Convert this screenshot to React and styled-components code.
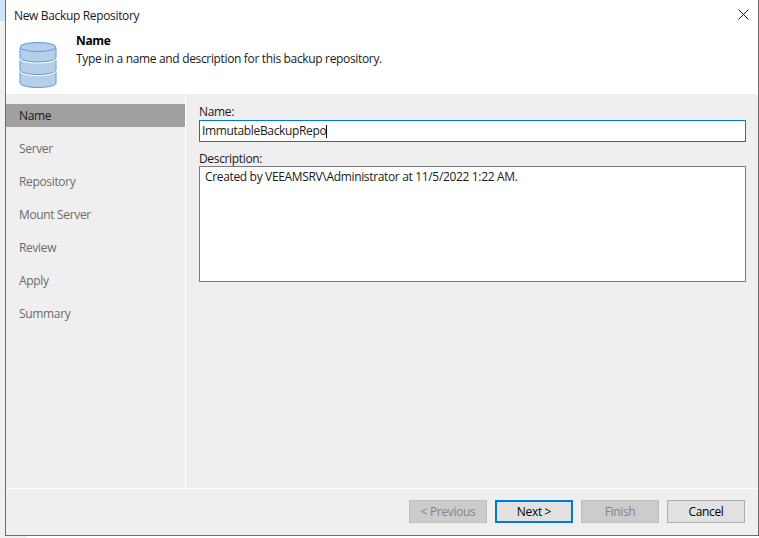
import React from 'react'
import styled, { createGlobalStyle } from 'styled-components'

const GlobalStyle = createGlobalStyle`
  html, body {
    margin: 0;
    padding: 0;
    background: #f0f0f0;
  }
  body {
    font-family: "Open Sans", "Liberation Sans", sans-serif;
    font-size: 12px;
    letter-spacing: -0.34px;
    color: #1a1a1a;
  }
`

const Page = styled.div`
  width: 759px;
  height: 538px;
  box-sizing: border-box;
  padding: 0 0 2px 5px;
  overflow: hidden;
  background:
    linear-gradient(#cfe3f8, #cfe3f8) 0 0 / 5px 21px no-repeat,
    linear-gradient(#fff, #fff) 27px 536px / 732px 2px no-repeat,
    #f0f0f0;
`

const Window = styled.div`
  height: 100%;
  box-sizing: border-box;
  border: 1px solid #6d6d6d;
  border-top: none;
  display: flex;
  flex-direction: column;
  background: #efefef;
`

const Header = styled.div`
  height: 94px;
  flex: none;
  background: #fff;
  display: flex;
  flex-direction: column;
`

const TitleBar = styled.div`
  height: 30px;
  padding-left: 8px;
  display: flex;
  align-items: center;
  justify-content: space-between;
`

const CloseButton = styled.button`
  width: 30px;
  height: 28px;
  margin-bottom: 2px;
  padding: 0;
  border: none;
  background: none;
  display: flex;
  align-items: center;
  justify-content: center;
`

const Banner = styled.div`
  display: flex;
  padding: 2px 0 0 13px;
`

const IconSlot = styled.div`
  margin-top: 10px;
  height: 46px;
`

const Heading = styled.div`
  margin-left: 19px;
  line-height: 18px;
`

const HeadingTitle = styled.div`
  font-weight: 700;
  color: #000;
`

const Body = styled.div`
  flex: 1;
  display: flex;
  min-height: 0;
`

const Sidebar = styled.div`
  width: 179px;
  flex: none;
  border-right: 1px solid #fff;
  padding-top: 10px;
  display: flex;
  flex-direction: column;
  gap: 10px;
`

const Step = styled.div`
  height: 23px;
  padding-left: 13px;
  display: flex;
  align-items: center;
  background: ${p => (p.$active ? '#a0a0a0' : 'transparent')};
  color: ${p => (p.$active ? '#1a1a1a' : '#6c6c6c')};
`

const Content = styled.div`
  flex: 1;
  padding: 10px 12px 0 13px;
  display: flex;
  flex-direction: column;
`

const FieldLabel = styled.div`
  line-height: 16px;
`

const NameInput = styled.div`
  height: 22px;
  margin-bottom: 9px;
  box-sizing: border-box;
  border: 1px solid #0078d7;
  background: #fff;
  padding: 0 0 2px 2px;
  display: flex;
  align-items: center;
`

const Caret = styled.span`
  width: 1px;
  height: 13px;
  margin-top: 2px;
  background: #000;
`

const DescriptionBox = styled.div`
  height: 116px;
  margin-top: -1px;
  box-sizing: border-box;
  border: 1px solid #7a7a7a;
  background: #fff;
  padding: 1px 5px;
  line-height: 17px;
`

const Footer = styled.div`
  height: 47px;
  flex: none;
  box-sizing: border-box;
  border-top: 1px solid #fff;
  padding: 11px 13px 0 0;
  display: flex;
  justify-content: flex-end;
  gap: 8px;
`

const Button = styled.button`
  width: 78px;
  height: 23px;
  box-sizing: border-box;
  padding: 0;
  font: inherit;
  letter-spacing: inherit;
  background: ${p => (p.disabled ? '#ccc' : '#e1e1e1')};
  color: ${p => (p.disabled ? '#838383' : '#000')};
  border: ${p => (p.$primary ? '2px solid #0078d7' : p.disabled ? '1px solid #bfbfbf' : '1px solid #adadad')};
`

const bandPath = (top, bottom) =>
  `M1 ${top}V${bottom - 4}c0 2.500 8 4.500 18 4.500s18-2 18-4.500V${top}`

const RepoIcon = () => (
  <svg width="38" height="46" viewBox="0 0 38 46" fill="#b5cfea" stroke="#5b9bd5" strokeWidth="1">
    <path d={bandPath(30, 45)} />
    <path d={bandPath(18, 32)} fill="#fff" stroke="#fff" strokeWidth="3" />
    <path d={bandPath(18, 32)} />
    <path d={bandPath(6, 19.500)} fill="#fff" stroke="#fff" strokeWidth="3" />
    <path d={bandPath(6, 19.500)} />
    <ellipse cx="19" cy="5" rx="18" ry="4.500" />
  </svg>
)

const steps = ['Name', 'Server', 'Repository', 'Mount Server', 'Review', 'Apply', 'Summary']

const App = () => {
  return (
    <Page>
      <GlobalStyle />
      <Window>
        <Header>
          <TitleBar>
            New Backup Repository
            <CloseButton aria-label="Close">
              <svg width="11" height="11" viewBox="0 0 11 11" stroke="#111" strokeWidth="1">
                <path d="M0.500 0.500l10 10M10.500 0.500l-10 10" />
              </svg>
            </CloseButton>
          </TitleBar>
          <Banner>
            <IconSlot><RepoIcon /></IconSlot>
            <Heading>
              <HeadingTitle>Name</HeadingTitle>
              Type in a name and description for this backup repository.
            </Heading>
          </Banner>
        </Header>
        <Body>
          <Sidebar>
            {steps.map((s, i) => (
              <Step key={s} $active={i === 0}>{s}</Step>
            ))}
          </Sidebar>
          <Content>
            <FieldLabel>Name:</FieldLabel>
            <NameInput>ImmutableBackupRepo<Caret /></NameInput>
            <FieldLabel>Description:</FieldLabel>
            <DescriptionBox>Created by VEEAMSRV\Administrator at 11/5/2022 1:22 AM.</DescriptionBox>
          </Content>
        </Body>
        <Footer>
          <Button disabled>&lt; Previous</Button>
          <Button $primary>Next &gt;</Button>
          <Button disabled>Finish</Button>
          <Button>Cancel</Button>
        </Footer>
      </Window>
    </Page>
  )
}

export default App
